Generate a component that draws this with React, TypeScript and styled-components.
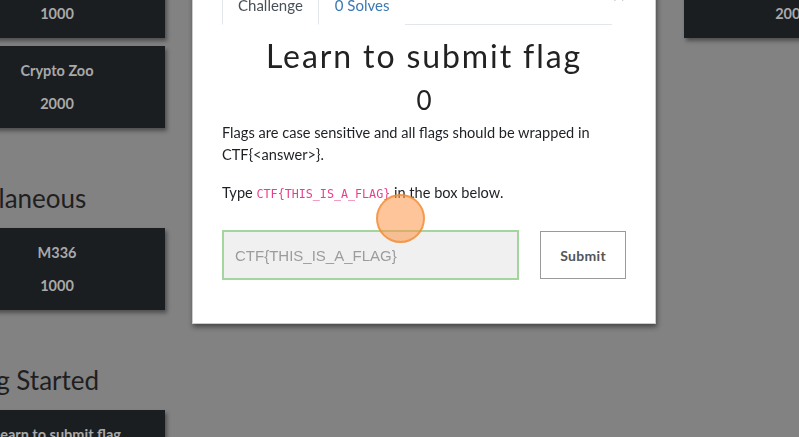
import styled, { createGlobalStyle } from "styled-components";

const GlobalStyle = createGlobalStyle`
  html, body {
    margin: 0;
    padding: 0;
    background: #828282;
    font-family: Lato, "Open Sans", sans-serif;
  }
  * {
    box-sizing: border-box;
  }
`;

const Page = styled.div`
  position: relative;
  width: 100vw;
  height: 437px;
  overflow: hidden;
  background: #828282;
`;

const Board = styled.div`
  width: 1100px;
  margin-left: -75px;
  margin-top: -89px;
`;

const Section = styled.section`
  & + & {
    margin-top: 55px;
  }
`;

const CategoryTitle = styled.h3`
  margin: 0 0 14px 0;
  font-family: Lato, sans-serif;
  font-weight: 400;
  font-size: 26px;
  line-height: 31px;
  color: #1f1f1f;
`;

const CardGrid = styled.div`
  display: grid;
  grid-template-columns: repeat(4, 216px);
  column-gap: 29px;
  row-gap: 8px;
  padding-left: 24px;
`;

const Card = styled.div<{ $col: number }>`
  grid-column: ${(p) => p.$col};
  height: 82px;
  padding-top: 15px;
  background: #1b1e21;
  box-shadow: 2px 3px 4px rgba(0, 0, 0, 0.4);
  text-align: center;
  color: #a9a9a9;
  font-family: Lato, sans-serif;
  font-weight: 700;
  font-size: 14.5px;
`;

const CardName = styled.div`
  line-height: 20px;
`;

const CardValue = styled.div`
  margin-top: 13px;
  line-height: 20px;
`;

const Overlay = styled.div`
  position: fixed;
  inset: 0;
  display: flex;
  align-items: flex-start;
  padding-left: 192px;
`;

const Modal = styled.div`
  width: 464px;
  margin-top: -32px;
  padding: 16px 29px 43px 29px;
  background: #fff;
  border: 1px solid rgba(0, 0, 0, 0.2);
  box-shadow: 1px 3px 5px rgba(0, 0, 0, 0.45);
`;

const Header = styled.div`
  display: flex;
  align-items: flex-start;
`;

const Tabs = styled.div`
  flex: 1;
  display: flex;
  border-bottom: 1px solid #e3e6ea;
`;

const Tab = styled.div<{ $active?: boolean }>`
  padding: 8px 15px;
  margin-bottom: -1px;
  font-size: 15px;
  line-height: 22px;
  color: ${(p) => (p.$active ? "#495057" : "#3b78b4")};
  background: #fff;
  border: 1px solid ${(p) => (p.$active ? "#e3e6ea" : "transparent")};
  border-bottom-color: ${(p) => (p.$active ? "#fff" : "transparent")};
`;

const Close = styled.div`
  width: 14px;
  margin-top: -1px;
  text-align: center;
  font-size: 22px;
  line-height: 22px;
  color: #8a8a8a;
`;

const Title = styled.h2`
  margin: 12px 0 0 0;
  text-align: center;
  font-family: Lato, sans-serif;
  font-weight: 400;
  font-size: 32px;
  line-height: 38px;
  letter-spacing: 1.9px;
  color: #222;
`;

const Points = styled.h3`
  margin: 10px 0 0 0;
  text-align: center;
  font-family: Lato, sans-serif;
  font-weight: 400;
  font-size: 26px;
  line-height: 31px;
  color: #222;
`;

const Description = styled.div`
  margin-top: 6px;
  font-size: 14.6px;
  line-height: 22px;
  color: #1d2024;
  p {
    margin: 0 0 16px 0;
  }
  p:last-child {
    margin-bottom: 0;
  }
`;

const Code = styled.code`
  font-family: "DejaVu Sans Mono", "Liberation Mono", monospace;
  font-size: 11.7px;
  color: #e83e8c;
`;

const SubmitRow = styled.form`
  display: flex;
  align-items: center;
  gap: 21px;
  margin-top: 25px;
`;

const FlagInput = styled.input`
  width: 298px;
  height: 50px;
  padding: 0 11px;
  background: #f0f0f0;
  border: 2px solid #a4d59f;
  outline: none;
  font-family: "Liberation Sans", Arial, sans-serif;
  font-size: 15px;
  color: #333;
  &::placeholder {
    color: #9c9c9c;
  }
`;

const SubmitButton = styled.button`
  width: 86px;
  height: 48px;
  background: #fff;
  border: 1px solid #9a9a9a;
  font-family: Lato, sans-serif;
  font-weight: 700;
  font-size: 14px;
  letter-spacing: 0.3px;
  color: #555;
`;

const CursorMark = styled.div`
  position: absolute;
  left: 376px;
  top: 194px;
  width: 49px;
  height: 49px;
  border-radius: 50%;
  background: rgba(252, 150, 70, 0.55);
  border: 2px solid rgba(240, 140, 55, 0.75);
  pointer-events: none;
`;

type CardData = { name: string; value: number; col: number };

const sections: { title: string; cards: CardData[] }[] = [
  {
    title: "Web",
    cards: [
      { name: "Cookies", value: 1000, col: 1 },
      { name: "Robots", value: 2000, col: 4 },
      { name: "Crypto Zoo", value: 2000, col: 1 },
    ],
  },
  {
    title: "Miscellaneous",
    cards: [{ name: "M336", value: 1000, col: 1 }],
  },
  {
    title: "Getting Started",
    cards: [{ name: "Learn to submit flag", value: 0, col: 1 }],
  },
];

const App: React.FC = () => {
  return (
    <Page>
      <GlobalStyle />
      <Board>
        {sections.map((s) => (
          <Section key={s.title}>
            <CategoryTitle>{s.title}</CategoryTitle>
            <CardGrid>
              {s.cards.map((c) => (
                <Card key={c.name} $col={c.col}>
                  <CardName>{c.name}</CardName>
                  <CardValue>{c.value}</CardValue>
                </Card>
              ))}
            </CardGrid>
          </Section>
        ))}
      </Board>
      <Overlay>
        <Modal>
          <Header>
            <Tabs>
              <Tab $active>Challenge</Tab>
              <Tab>0 Solves</Tab>
            </Tabs>
            <Close>×</Close>
          </Header>
          <Title>Learn to submit flag</Title>
          <Points>0</Points>
          <Description>
            <p>
              Flags are case sensitive and all flags should be wrapped in
              CTF{"{<answer>}"}.
            </p>
            <p>
              Type <Code>CTF{"{THIS_IS_A_FLAG}"}</Code> in the box below.
            </p>
          </Description>
          <SubmitRow onSubmit={(e) => e.preventDefault()}>
            <FlagInput placeholder="CTF{THIS_IS_A_FLAG}" />
            <SubmitButton type="submit">Submit</SubmitButton>
          </SubmitRow>
        </Modal>
      </Overlay>
      <CursorMark />
    </Page>
  );
};

export default App;
